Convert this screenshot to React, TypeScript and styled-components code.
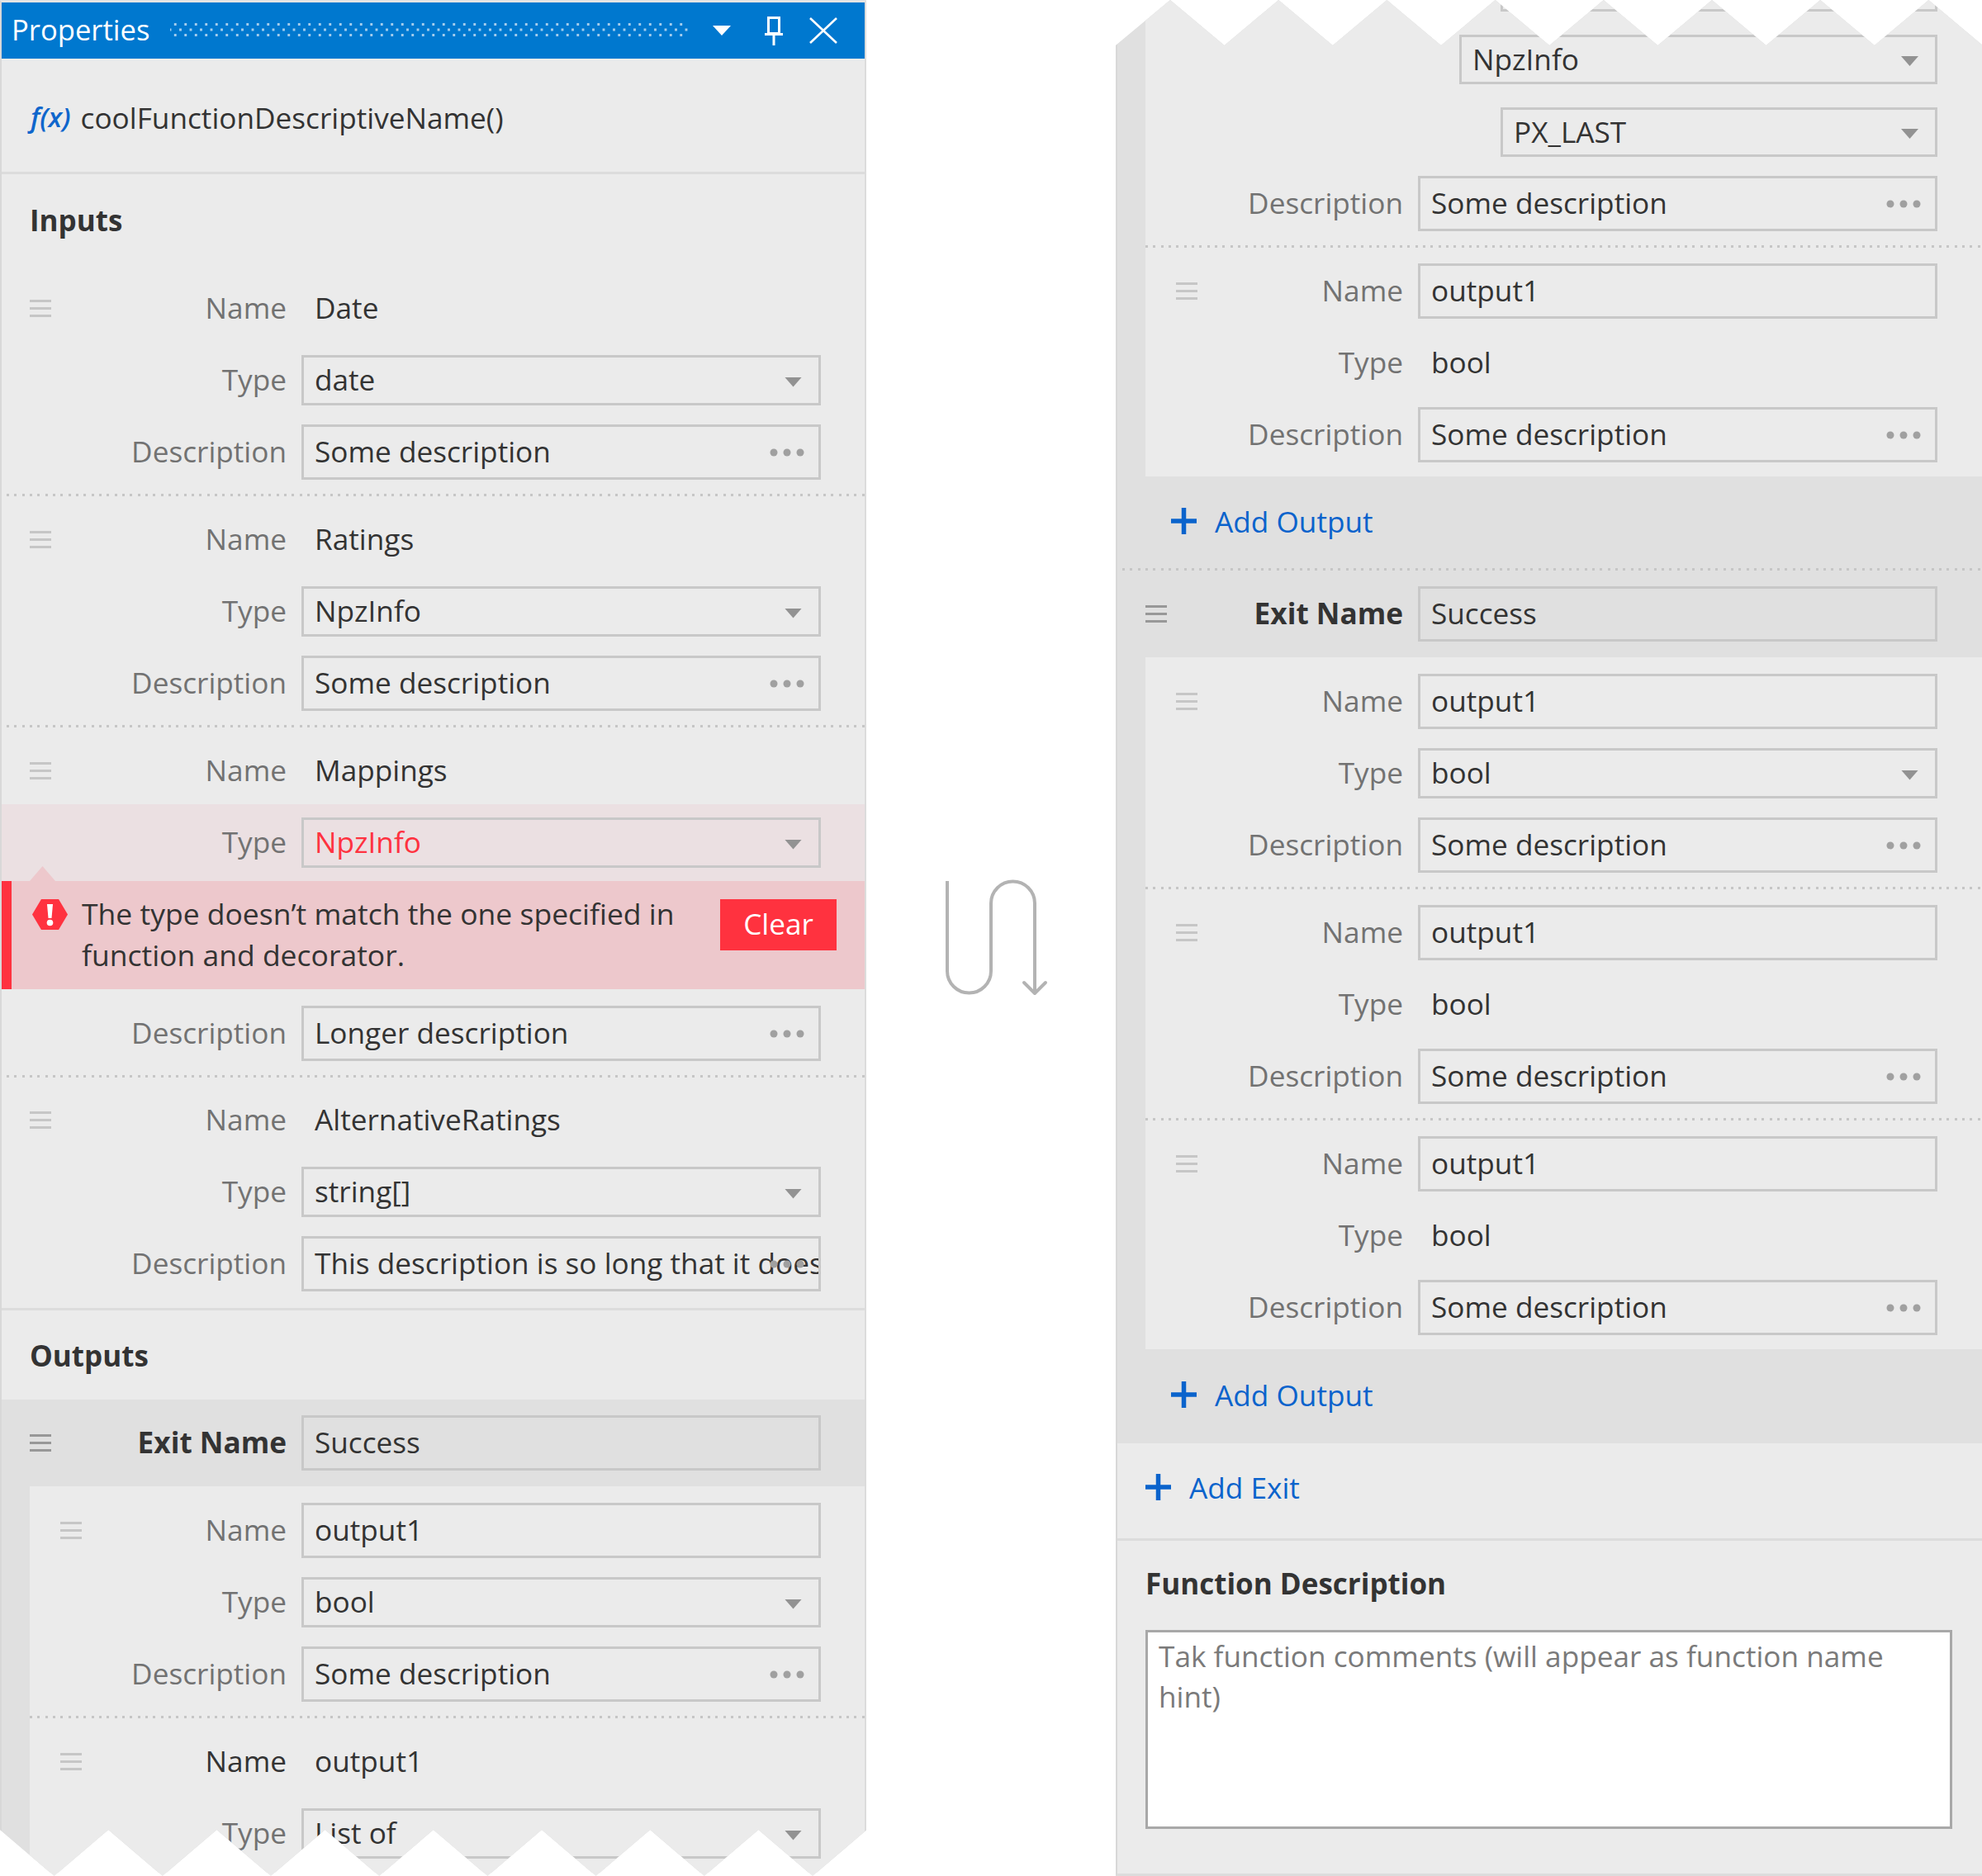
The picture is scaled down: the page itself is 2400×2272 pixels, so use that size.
import { ReactNode } from "react";
import styled, { createGlobalStyle } from "styled-components";

const GlobalStyle = createGlobalStyle`
  html, body {
    margin: 0;
    padding: 0;
    background: #fff;
  }
  body {
    font-family: "Open Sans", "Noto Sans", sans-serif;
    font-size: 35.2px;
    color: #333;
  }
`;

const zigzag = (startX: number, teeth: number, high: number, low: number) => {
  const points: string[] = [];
  for (let i = 0; i <= teeth * 2; i++) {
    const x = startX + i * 65.6;
    points.push(`${x}px ${i % 2 === 0 ? high : low}px`);
  }
  return points;
};

const leftClip = `polygon(0 0, 1049px 0, ${zigzag(0, 8, 2216, 2272)
  .reverse()
  .join(", ")})`;

const rightClip = `polygon(0 55px, ${zigzag(66, 8, 0, 55).join(", ")}, 1049px 55px, 1049px 2272px, 0 2272px)`;

const Page = styled.div`
  display: flex;
  align-items: flex-start;
  width: 2400px;
  height: 2272px;
  overflow: hidden;
`;

const Panel = styled.div<{ $clip: string; $right?: boolean }>`
  --row-end: ${(p) => (p.$right ? 54 : 53)}px;
  box-sizing: border-box;
  flex: none;
  width: 1049px;
  height: 2272px;
  overflow: hidden;
  background: #ebebeb;
  border-left: 2px solid #d8d8d8;
  border-right: ${(p) => (p.$right ? "none" : "2px solid #dcdcdc")};
  border-top: ${(p) => (p.$right ? "none" : "3px solid #e4e4e4")};
  border-bottom: ${(p) => (p.$right ? "3px solid #dcdcdc" : "none")};
  clip-path: ${(p) => p.$clip};
`;

const Gutter = styled.div`
  flex: none;
  width: 302px;
  padding: 1065px 0 0 94px;
  box-sizing: border-box;
`;

const TitleBar = styled.div`
  display: flex;
  align-items: center;
  height: 68px;
  padding-left: 12px;
  background: #0078cf;
  color: #fff;
`;

const Title = styled.span`
  font-size: 34.6px;
  font-weight: 500;
  width: 192px;
  margin-top: -3px;
`;

const Grip = styled.div`
  width: 629px;
  height: 16px;
  margin-top: -3px;
  background-image:
    radial-gradient(circle, #a4cdec 1.5px, transparent 1.7px),
    radial-gradient(circle, #a4cdec 1.5px, transparent 1.7px);
  background-size: 12.5px 13px;
  background-position: 0 -5px, 6.25px 1.5px;
`;

const TitleIcon = styled.svg<{ $left: number }>`
  flex: none;
  margin-left: ${(p) => p.$left}px;
`;

const FunctionRow = styled.div`
  box-sizing: border-box;
  display: flex;
  align-items: center;
  gap: 12px;
  height: 140px;
  padding: 4px 0 0 35px;
  border-bottom: 3px solid #dcdcdc;
`;

const Fx = styled.span`
  font-size: 33px;
  font-style: italic;
  font-weight: 600;
  color: #0f66cc;
`;

const Heading = styled.div<{ $top: number; $bottom: number }>`
  height: 50px;
  line-height: 47px;
  padding-left: 34px;
  margin-top: ${(p) => p.$top}px;
  margin-bottom: ${(p) => p.$bottom}px;
  font-size: 35px;
  font-weight: 700;
  color: #333;
`;

const Row = styled.div<{ $inset?: number; $top?: number }>`
  display: grid;
  grid-template-columns: 1fr 629px;
  column-gap: 18px;
  align-items: center;
  padding-left: ${(p) => p.$inset ?? 34}px;
  padding-right: var(--row-end);
  margin-top: ${(p) => p.$top ?? 0}px;
`;

const LabelCell = styled.div`
  display: flex;
  align-items: center;
  justify-content: space-between;
  min-height: 60px;
`;

const LabelText = styled.span<{ $tone?: "dark" | "bold" }>`
  margin-left: auto;
  padding-bottom: 3px;
  color: ${(p) => (p.$tone ? "#333" : "#727272")};
  font-weight: ${(p) => (p.$tone === "bold" ? 700 : 400)};
`;

const Handle = styled.div<{ $strong?: boolean }>`
  width: 26px;
  height: 21px;
  background: repeating-linear-gradient(
    to bottom,
    ${(p) => (p.$strong ? "#989898" : "#c6c6c6")} 0 3px,
    transparent 3px 9px
  );
`;

const PlainValue = styled.div<{ $h?: number }>`
  box-sizing: border-box;
  display: flex;
  align-items: center;
  height: ${(p) => p.$h ?? 67}px;
  padding: 0 0 3px 16px;
  color: #333;
`;

const Box = styled.div<{ $h?: number; $indent?: number; $error?: boolean }>`
  position: relative;
  box-sizing: border-box;
  display: flex;
  align-items: center;
  height: ${(p) => p.$h ?? 67}px;
  margin-left: ${(p) => p.$indent ?? 0}px;
  padding: 0 13px 3px;
  border: 3px solid #c8c8c8;
  color: ${(p) => (p.$error ? "#ff323f" : "#333")};
  overflow: hidden;
  white-space: nowrap;
`;

const Caret = styled.span`
  position: absolute;
  right: 20px;
  top: 50%;
  width: 21px;
  height: 12px;
  margin-top: -4px;
  background: #929292;
  clip-path: polygon(0 0, 100% 0, 50% 100%);
`;

const Dots = styled.svg`
  position: absolute;
  right: 17px;
  top: 50%;
  margin-top: -6px;
`;

const DottedLine = styled.div<{ $x?: number }>`
  height: 3px;
  margin-left: ${(p) => p.$x ?? 6}px;
  background: repeating-linear-gradient(to right, #c6c6c6 0 3px, transparent 3px 9.33px);
`;

const Group = styled.div`
  display: flex;
  flex-direction: column;
  gap: 23px;
  padding-bottom: 17px;
`;

const GroupEnd = styled.div<{ $h?: number }>`
  height: ${(p) => p.$h ?? 19}px;
`;

const AlertRow = styled.div`
  margin-top: 7px;
  padding: 16px 0;
  background: #ebe0e2;
`;

const Alert = styled.div`
  position: relative;
  box-sizing: border-box;
  display: flex;
  align-items: flex-start;
  height: 131px;
  padding: 22px 34px 0 25px;
  background: #edc8cc;
  border-left: 12px solid #ff323f;
  margin-bottom: 20px;
  &::before {
    content: "";
    position: absolute;
    left: 22px;
    bottom: 100%;
    width: 31px;
    height: 18px;
    background: #edc8cc;
    clip-path: polygon(50% 0, 100% 100%, 0 100%);
  }
`;

const AlertText = styled.div`
  flex: 1;
  margin-left: 17px;
  margin-top: -8px;
  font-size: 35.5px;
  line-height: 50px;
  color: #333;
  white-space: nowrap;
`;

const ClearButton = styled.button`
  width: 141px;
  height: 62px;
  border: none;
  background: #ff323f;
  color: #fff;
  font: inherit;
  padding: 0 0 4px;
`;

const ExitSection = styled.div`
  background: #e0e0e0;
`;

const ExitRow = styled(Row)`
  padding-top: 19px;
  padding-bottom: 19px;
`;

const Outputs = styled.div<{ $top?: number }>`
  margin-left: 34px;
  padding-top: ${(p) => p.$top ?? 20}px;
  background: #ebebeb;
`;

const AddRow = styled.div<{ $inset: number; $h: number; $pad?: number }>`
  box-sizing: border-box;
  display: flex;
  align-items: center;
  gap: 22px;
  height: ${(p) => p.$h}px;
  padding-left: ${(p) => p.$inset}px;
  padding-bottom: ${(p) => p.$pad ?? 4}px;
  color: #0a63cc;
`;

const Divider = styled.div<{ $top?: number }>`
  height: 3px;
  margin-top: ${(p) => p.$top ?? 0}px;
  background: #dcdcdc;
`;

const CommentBox = styled.div`
  box-sizing: border-box;
  width: 977px;
  height: 241px;
  margin-left: 34px;
  padding: 4px 13px;
  background: #fff;
  border: 3px solid #a8a8a8;
  line-height: 49px;
  color: #7a7a7a;
  white-space: nowrap;
`;

const DotsIcon = () => (
  <Dots width="42" height="12" viewBox="0 0 42 12">
    <circle cx="5" cy="6" r="4.5" fill="#a0a0a0" />
    <circle cx="21" cy="6" r="4.5" fill="#a0a0a0" />
    <circle cx="37" cy="6" r="4.5" fill="#a0a0a0" />
  </Dots>
);

const Plus = () => (
  <svg width="31" height="32" viewBox="0 0 31 32">
    <path d="M15.5 0v32M0 16h31" stroke="#0a63cc" strokeWidth="5.5" />
  </svg>
);

const SelectBox = ({
  value,
  indent,
  error,
  height = 61,
}: {
  value?: string;
  indent?: number;
  error?: boolean;
  height?: number;
}) => (
  <Box $h={height} $indent={indent} $error={error}>
    {value}
    <Caret />
  </Box>
);

const DescBox = ({ value = "Some description" }: { value?: string }) => (
  <Box>
    {value}
    <DotsIcon />
  </Box>
);

const Field = ({
  label,
  handle,
  inset,
  tone,
  children,
}: {
  label: string;
  handle?: boolean;
  inset?: number;
  tone?: "dark" | "bold";
  children: ReactNode;
}) => (
  <Row $inset={inset}>
    <LabelCell>
      {handle && <Handle />}
      <LabelText $tone={tone}>{label}</LabelText>
    </LabelCell>
    {children}
  </Row>
);

const InputGroup = ({ name, type }: { name: string; type: string }) => (
  <Group>
    <Field label="Name" handle>
      <PlainValue>{name}</PlainValue>
    </Field>
    <Field label="Type">
      <SelectBox value={type} />
    </Field>
    <Field label="Description">
      <DescBox />
    </Field>
  </Group>
);

const OutputGroup = ({ selectType }: { selectType?: boolean }) => (
  <Group>
    <Field label="Name" handle inset={37}>
      <Box>output1</Box>
    </Field>
    <Field label="Type" inset={37}>
      {selectType ? <SelectBox value="bool" /> : <PlainValue $h={61}>bool</PlainValue>}
    </Field>
    <Field label="Description" inset={37}>
      <DescBox />
    </Field>
  </Group>
);

const ExitName = () => (
  <ExitRow>
    <LabelCell>
      <Handle $strong />
      <LabelText $tone="bold">Exit Name</LabelText>
    </LabelCell>
    <Box>Success</Box>
  </ExitRow>
);

const App = () => {
  return (
    <Page>
      <GlobalStyle />
      <Panel $clip={leftClip}>
        <TitleBar>
          <Title>Properties</Title>
          <Grip />
          <TitleIcon $left={28} width="22" height="12" viewBox="0 0 22 12">
            <path d="M0 0h22L11 12z" fill="#fff" />
          </TitleIcon>
          <TitleIcon $left={41} width="22" height="35" viewBox="0 0 22 35">
            <path
              d="M4.5 1.5h13v19h-13zM0 21.5h22M11 21.5V35"
              fill="none"
              stroke="#fff"
              strokeWidth="3"
            />
          </TitleIcon>
          <TitleIcon $left={32} width="34" height="32" viewBox="0 0 34 32">
            <path d="M1 1l32 30M33 1L1 31" stroke="#fff" strokeWidth="2.6" />
          </TitleIcon>
        </TitleBar>
        <FunctionRow>
          <Fx>f(x)</Fx>
          <span>coolFunctionDescriptiveName()</span>
        </FunctionRow>

        <Heading $top={32} $bottom={47}>Inputs</Heading>
        <InputGroup name="Date" type="date" />
        <DottedLine />
        <GroupEnd />
        <InputGroup name="Ratings" type="NpzInfo" />
        <DottedLine />
        <GroupEnd />
        <Field label="Name" handle>
          <PlainValue>Mappings</PlainValue>
        </Field>
        <AlertRow>
          <Field label="Type">
            <SelectBox value="NpzInfo" error />
          </Field>
        </AlertRow>
        <Alert>
          <svg width="43" height="37" viewBox="0 0 43 37">
            <path d="M0 18.5L11 0h21l11 18.5L32 37H11z" fill="#ff323f" />
            <path d="M18 6h7l-1.5 17h-4z" fill="#fff" />
            <circle cx="21.5" cy="28.5" r="3.8" fill="#fff" />
          </svg>
          <AlertText>
            The type doesn’t match the one specified in
            <br />
            function and decorator.
          </AlertText>
          <ClearButton>Clear</ClearButton>
        </Alert>
        <Group>
          <Field label="Description">
            <DescBox value="Longer description" />
          </Field>
        </Group>
        <DottedLine />
        <GroupEnd $h={18} />
        <Group>
          <Field label="Name" handle>
            <PlainValue>AlternativeRatings</PlainValue>
          </Field>
          <Field label="Type">
            <SelectBox value="string[]" />
          </Field>
          <Field label="Description">
            <DescBox value="This description is so long that it does" />
          </Field>
        </Group>
        <Divider $top={3} />

        <Heading $top={31} $bottom={27}>Outputs</Heading>
        <ExitSection>
          <ExitName />
          <Outputs>
            <OutputGroup selectType />
            <DottedLine $x={0} />
            <GroupEnd />
            <Group>
              <Field label="Name" handle inset={37} tone="dark">
                <PlainValue>output1</PlainValue>
              </Field>
              <Field label="Type" inset={37}>
                <SelectBox value="List of" />
              </Field>
            </Group>
          </Outputs>
        </ExitSection>
      </Panel>

      <Gutter>
        <svg width="128" height="146" viewBox="0 0 128 146">
          <path
            d="M4 2v109a26.5 26.5 0 0 0 53 0V29a26.5 26.5 0 0 1 53 0v108"
            fill="none"
            stroke="#b3b3b3"
            strokeWidth="4"
          />
          <path
            d="M97 125l13 13 13-13"
            fill="none"
            stroke="#b3b3b3"
            strokeWidth="4"
            strokeLinecap="round"
            strokeLinejoin="round"
          />
        </svg>
      </Gutter>

      <Panel $clip={rightClip} $right>
        <ExitSection>
          <Outputs $top={0}>
            <Group>
              <Row $inset={37} $top={-46}>
                <LabelCell />
                <SelectBox indent={100} height={60} />
              </Row>
              <Row $inset={37} $top={5}>
                <LabelCell />
                <SelectBox value="NpzInfo" indent={50} height={60} />
              </Row>
              <Row $inset={37} $top={5}>
                <LabelCell />
                <SelectBox value="PX_LAST" indent={100} height={60} />
              </Row>
              <Field label="Description" inset={37}>
                <DescBox />
              </Field>
            </Group>
            <DottedLine $x={0} />
            <GroupEnd />
            <OutputGroup />
          </Outputs>
          <AddRow $inset={65} $h={111}>
            <Plus />
            Add Output
          </AddRow>
          <DottedLine />
          <ExitName />
          <Outputs>
            <OutputGroup selectType />
            <DottedLine $x={0} />
            <GroupEnd />
            <OutputGroup />
            <DottedLine $x={0} />
            <GroupEnd />
            <OutputGroup />
          </Outputs>
          <AddRow $inset={65} $h={114}>
            <Plus />
            Add Output
          </AddRow>
        </ExitSection>
        <AddRow $inset={34} $h={115} $pad={9}>
          <Plus />
          Add Exit
        </AddRow>
        <Divider />
        <Heading $top={28} $bottom={30}>Function Description</Heading>
        <CommentBox>
          Tak function comments (will appear as function name
          <br />
          hint)
        </CommentBox>
      </Panel>
    </Page>
  );
};

export default App;
